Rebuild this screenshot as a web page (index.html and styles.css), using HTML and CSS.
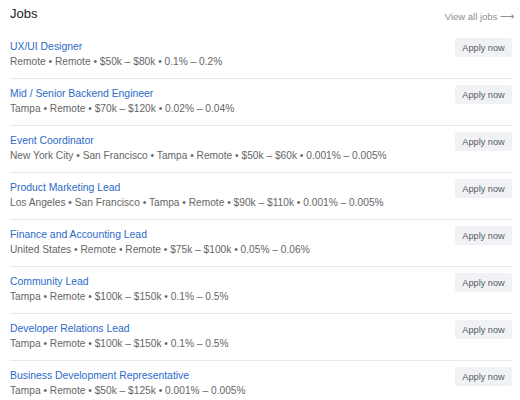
FILE: index.html
```html
<!DOCTYPE html>
<html>
<head>
<meta charset="utf-8">
<link rel="stylesheet" href="styles.css">
</head>
<body>
<div class="jobs">
  <div class="header">
    <h2 class="heading">Jobs</h2>
    <a class="view-all" href="#">View all jobs <span class="arrow">⟶</span></a>
  </div>
  <ul class="list">
    <li class="row">
      <div class="info"><a class="title" href="#">UX/UI Designer</a><div class="meta">Remote • Remote • $50k – $80k • 0.1% – 0.2%</div></div>
      <button class="apply">Apply now</button>
    </li>
    <li class="row">
      <div class="info"><a class="title" href="#">Mid / Senior Backend Engineer</a><div class="meta">Tampa • Remote • $70k – $120k • 0.02% – 0.04%</div></div>
      <button class="apply">Apply now</button>
    </li>
    <li class="row">
      <div class="info"><a class="title" href="#">Event Coordinator</a><div class="meta">New York City • San Francisco • Tampa • Remote • $50k – $60k • 0.001% – 0.005%</div></div>
      <button class="apply">Apply now</button>
    </li>
    <li class="row">
      <div class="info"><a class="title" href="#">Product Marketing Lead</a><div class="meta">Los Angeles • San Francisco • Tampa • Remote • $90k – $110k • 0.001% – 0.005%</div></div>
      <button class="apply">Apply now</button>
    </li>
    <li class="row">
      <div class="info"><a class="title" href="#">Finance and Accounting Lead</a><div class="meta">United States • Remote • Remote • $75k – $100k • 0.05% – 0.06%</div></div>
      <button class="apply">Apply now</button>
    </li>
    <li class="row">
      <div class="info"><a class="title" href="#">Community Lead</a><div class="meta">Tampa • Remote • $100k – $150k • 0.1% – 0.5%</div></div>
      <button class="apply">Apply now</button>
    </li>
    <li class="row">
      <div class="info"><a class="title" href="#">Developer Relations Lead</a><div class="meta">Tampa • Remote • $100k – $150k • 0.1% – 0.5%</div></div>
      <button class="apply">Apply now</button>
    </li>
    <li class="row">
      <div class="info"><a class="title" href="#">Business Development Representative</a><div class="meta">Tampa • Remote • $50k – $125k • 0.001% – 0.005%</div></div>
      <button class="apply">Apply now</button>
    </li>
  </ul>
</div>
</body>
</html>
```
FILE: styles.css
```css
html, body {
  margin: 0;
  padding: 0;
  background: #fff;
  font-family: "Liberation Sans", Arial, sans-serif;
}
.jobs {
  padding: 0 8px 0 10px;
}
.header {
  display: flex;
  justify-content: space-between;
  align-items: center;
  height: 32px;
}
.heading {
  margin: 0;
  font-size: 13px;
  font-weight: normal;
  color: #222;
  position: relative;
  top: -3px;
}
.view-all {
  font-size: 9.5px;
  color: #8a8f99;
  text-decoration: none;
  margin-right: -2px;
}
.arrow {
  color: #8a8f99;
}
.list {
  list-style: none;
  margin: 0;
  padding: 0;
}
.row {
  display: flex;
  justify-content: space-between;
  align-items: flex-start;
  padding: 7px 0 8px;
  border-bottom: 1px solid #e8e8e8;
}
.row:last-child {
  border-bottom: none;
}
.title {
  display: block;
  font-size: 10.4px;
  line-height: 15px;
  color: #2c6ac8;
  text-decoration: none;
}
.meta {
  font-size: 10.2px;
  line-height: 16px;
  color: #666;
}
.apply {
  margin-top: -1px;
  height: 19px;
  width: 57px;
  padding: 0;
  border: none;
  border-radius: 2px;
  background: #f0f2f5;
  color: #555a63;
  font-family: "Liberation Sans", Arial, sans-serif;
  font-size: 9.2px;
}
```
